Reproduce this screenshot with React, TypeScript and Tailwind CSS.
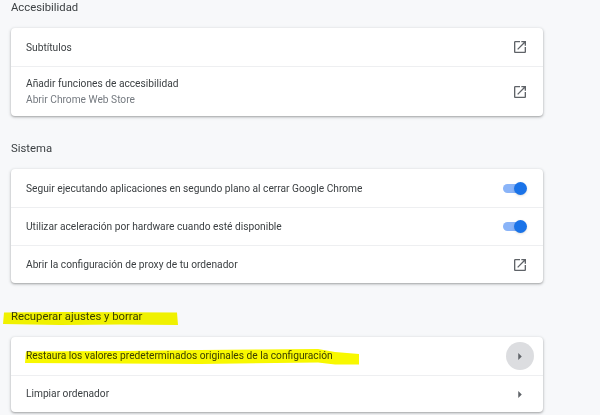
function OpenIcon() {
  return (
    <svg viewBox="0 0 24 24" className="h-[16px] w-[16px] fill-[#5f6368]">
      <path d="M19 19H5V5h7V3H5c-1.11 0-2 .9-2 2v14c0 1.1.89 2 2 2h14c1.1 0 2-.9 2-2v-7h-2v7zM14 3v2h3.59l-9.83 9.83 1.41 1.41L19 6.41V10h2V3h-7z" />
    </svg>
  );
}

function Arrow() {
  return (
    <svg viewBox="0 0 4 8" className="h-[7px] w-[4px] fill-[#5f6368]">
      <path d="M0 0l4 4-4 4z" />
    </svg>
  );
}

function Toggle() {
  return (
    <div className="relative h-[13px] w-[25px]">
      <div className="absolute left-0 top-[2px] h-[9px] w-[22px] rounded-full bg-[#8ab4f8]" />
      <div className="absolute right-[1px] top-0 h-[13px] w-[13px] rounded-full bg-[#1a73e8] shadow-sm" />
    </div>
  );
}

function Row({ first, height, children, right }: { first?: boolean; height?: string; children: React.ReactNode; right: React.ReactNode }) {
  return (
    <div className={`flex items-center justify-between pl-[15px] pr-[15px] ${height ?? 'h-[38px]'} ${first ? '' : 'border-t border-[#eeeff1]'}`}>
      <div>{children}</div>
      <div className="flex items-center">{right}</div>
    </div>
  );
}

function Heading({ children, className }: { children: React.ReactNode; className: string }) {
  return <h2 className={`mb-[14px] h-[14px] text-[11.3px] font-normal leading-[16px] text-[#3c4043] ${className}`}>{children}</h2>;
}

function Card({ children }: { children: React.ReactNode }) {
  return <div className="rounded bg-white shadow-[0_1px_2px_rgba(60,64,67,0.35),0_1px_3px_1px_rgba(60,64,67,0.12)]">{children}</div>;
}

export default function App() {
  return (
    <div className="relative h-[415px] w-[600px] overflow-hidden bg-[#f7f8fa] pl-[11px] font-['Roboto',sans-serif] text-[10.2px] text-[#3c4043]">
      <div className="w-[532px]">
        <Heading className="">Accesibilidad</Heading>
        <Card>
          <Row first right={<OpenIcon />}><div className="pt-[1px]">Subtítulos</div></Row>
          <Row height="h-[50px]" right={<OpenIcon />}>
            <div className="leading-[16px]">Añadir funciones de accesibilidad</div>
            <div className="leading-[16px] text-[#757a80]">Abrir Chrome Web Store</div>
          </Row>
        </Card>

        <Heading className="mt-[25px]">Sistema</Heading>
        <Card>
          <Row first right={<Toggle />}><div className="pt-[1px]">Seguir ejecutando aplicaciones en segundo plano al cerrar Google Chrome</div></Row>
          <Row right={<Toggle />}><div className="pt-[1px]">Utilizar aceleración por hardware cuando esté disponible</div></Row>
          <Row right={<OpenIcon />}><div className="pt-[1px]">Abrir la configuración de proxy de tu ordenador</div></Row>
        </Card>

        <Heading className="mt-[26px]">Recuperar ajustes y borrar</Heading>
        <Card>
          <Row first right={
            <div className="-m-[6px] flex h-[28px] w-[28px] items-center justify-center rounded-full bg-[#dcdde0]">
              <Arrow />
            </div>
          }>
            <div>Restaura los valores predeterminados originales de la configuración</div>
          </Row>
          <Row height="h-[37px]" right={<div className="flex w-[16px] justify-center"><Arrow /></div>}>
            <div>Limpiar ordenador</div>
          </Row>
        </Card>
      </div>

      {/* marker strokes drawn on top of the screenshot */}
      <svg viewBox="0 0 600 415" className="pointer-events-none absolute inset-0 h-[415px] w-[600px] mix-blend-multiply">
        <path className="fill-[#f8f800]" d="M4 312.5L60 312L177 312.5L178 325L120 324.5L60 325L3 324z" />
        <path className="fill-[#f8f800]" d="M26 351.5L120 351L200 350L262 349.5L318 349L335 352L359 354L359 364.5L335 364.5L318 362.5L200 364L120 363.5L25 363z" />
      </svg>
    </div>
  );
}
